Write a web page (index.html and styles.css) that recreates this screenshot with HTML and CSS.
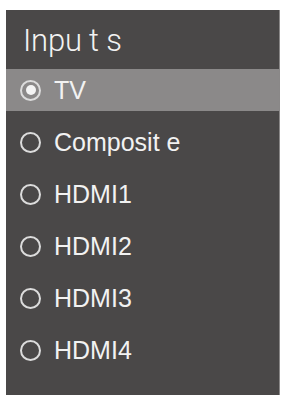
FILE: index.html
```html
<!DOCTYPE html>
<html>
<head>
<meta charset="utf-8">
<link rel="stylesheet" href="styles.css">
</head>
<body>
<div class="panel">
  <div class="title">Inpu t s</div>
  <ul class="list">
    <li class="item selected"><span class="radio on"></span><span class="label">TV</span></li>
    <li class="item"><span class="radio"></span><span class="label">Composit e</span></li>
    <li class="item"><span class="radio"></span><span class="label">HDMI1</span></li>
    <li class="item"><span class="radio"></span><span class="label">HDMI2</span></li>
    <li class="item"><span class="radio"></span><span class="label">HDMI3</span></li>
    <li class="item"><span class="radio"></span><span class="label">HDMI4</span></li>
  </ul>
</div>
</body>
</html>
```
FILE: styles.css
```css
html, body {
  margin: 0;
  padding: 0;
  background: #ffffff;
}
body {
  padding: 10px 2px 0 6px;
  height: 395px;
  box-sizing: border-box;
  overflow: hidden;
}
.panel {
  background: #4a4848;
  height: 385px;
  border-right: 1px solid #8a8888;
}
.title {
  height: 59px;
  box-sizing: border-box;
  padding: 13px 0 0 17px;
  font-family: Roboto, "Liberation Sans", sans-serif;
  font-weight: 300;
  font-size: 31px;
  line-height: 36px;
  color: #f2f2f2;
  letter-spacing: -0.2px;
}
.list {
  list-style: none;
  margin: 0;
  padding: 0;
  display: flex;
  flex-direction: column;
  gap: 10px;
}
.item {
  height: 42px;
  display: flex;
  align-items: center;
  padding-left: 14px;
}
.item.selected {
  background: #8b8989;
}
.radio {
  width: 17px;
  height: 17px;
  border: 2.5px solid #dcdcdc;
  border-radius: 50%;
  box-sizing: content-box;
  position: relative;
  flex: none;
}
.radio.on::after {
  content: "";
  position: absolute;
  left: 3.5px;
  top: 3.5px;
  width: 10px;
  height: 10px;
  border-radius: 50%;
  background: #f4f4f4;
}
.label {
  margin-left: 13px;
  font-family: "Liberation Sans", Arial, sans-serif;
  font-size: 25px;
  color: #f2f2f2;
}
```
